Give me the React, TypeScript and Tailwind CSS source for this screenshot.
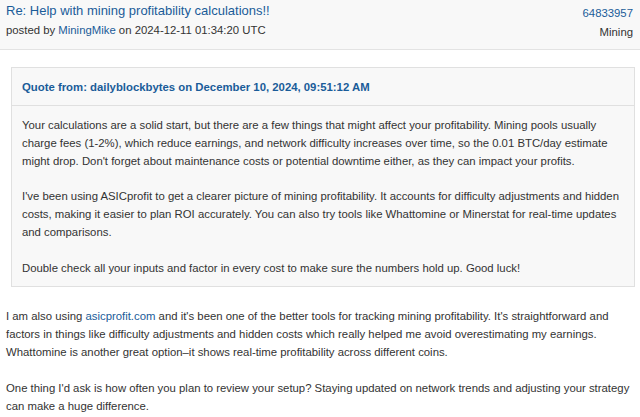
export default function App() {
  const font = { fontFamily: '"Liberation Sans", Arial, sans-serif' };
  return (
    <div style={font} className="w-[640px] h-[417px] overflow-hidden bg-white text-[11.35px] leading-[18px] text-[#333]">
      <div className="flex justify-between bg-[#f8f8f8] border-b border-[#e3e3e3] px-[6px] pt-[2px] h-[50px]">
        <div>
          <div className="text-[13px] leading-[18px] text-[#1a5c99]">Re: Help with mining profitability calculations!!</div>
          <div className="mt-[1px] text-[#333]">
            posted by <span className="text-[#1a5c99]">MiningMike</span> on 2024-12-11 01:34:20 UTC
          </div>
        </div>
        <div className="text-right pt-[2px] pr-[1px]">
          <div className="text-[#1a5c99]">64833957</div>
          <div className="mt-[1px]">Mining</div>
        </div>
      </div>
      <div className="ml-[11px] mr-[5px] mt-[17px] border border-[#e0e0e0] bg-[#f8f8f8]">
        <div className="h-[38px] flex items-center px-[10px] border-b border-[#e0e0e0] font-bold text-[#1a5c99]">
          Quote from: dailyblockbytes on December 10, 2024, 09:51:12 AM
        </div>
        <div className="px-[10px] pt-[10px] pb-[9px]">
          <p>Your calculations are a solid start, but there are a few things that might affect your profitability. Mining pools usually charge fees (1-2%), which reduce earnings, and network difficulty increases over time, so the 0.01 BTC/day estimate might drop. Don't forget about maintenance costs or potential downtime either, as they can impact your profits.</p>
          <p className="mt-[17px]">I've been using ASICprofit to get a clearer picture of mining profitability. It accounts for difficulty adjustments and hidden costs, making it easier to plan ROI accurately. You can also try tools like Whattomine or Minerstat for real-time updates and comparisons.</p>
          <p className="mt-[18px]">Double check all your inputs and factor in every cost to make sure the numbers hold up. Good luck!</p>
        </div>
      </div>
      <div className="px-[6px] pt-[20px] pr-[10px]">
        <p>I am also using <span className="text-[#1a5c99]">asicprofit.com</span> and it's been one of the better tools for tracking mining profitability. It's straightforward and factors in things like difficulty adjustments and hidden costs which really helped me avoid overestimating my earnings. Whattomine is another great option–it shows real-time profitability across different coins.</p>
        <p className="mt-[18px]">One thing I'd ask is how often you plan to review your setup? Staying updated on network trends and adjusting your strategy can make a huge difference.</p>
      </div>
    </div>
  );
}
